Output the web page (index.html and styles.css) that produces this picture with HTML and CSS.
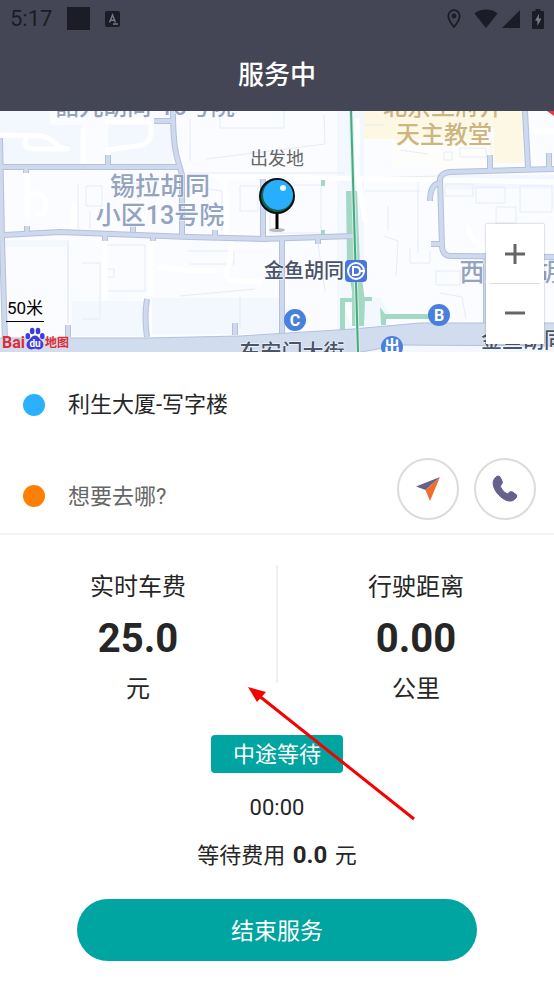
FILE: index.html
```html
<!DOCTYPE html>
<html lang="zh-CN">
<head>
    <meta charset="UTF-8">
    <meta name="viewport" content="width=device-width, initial-scale=1.0">
    <title>服务中</title>
    <link rel="stylesheet" href="styles.css">
</head>
<body>
    <header>
        <div class="status-bar">
            <span class="clock">5:17</span>
            <span class="square"></span>
            <svg width="15" height="16" viewBox="0 0 15 16">
                <rect width="15" height="16" rx="2" fill="#1b1c25"/>
                <path d="M4.5 11.5 7.5 4l3 7.5M5.5 9.3h4M8 13h5" fill="none" stroke="#777986" stroke-width="1.4"/>
            </svg>
            <span class="status-right">
                <svg width="14" height="20" viewBox="0 0 14 20">
                    <path d="M7 1.2a5.7 5.7 0 0 0-5.7 5.7C1.3 11 7 18 7 18s5.7-7 5.7-11.1A5.7 5.7 0 0 0 7 1.2z" fill="none" stroke="#1b1c25" stroke-width="1.8"/>
                    <circle cx="7" cy="7" r="2.4" fill="#1b1c25"/>
                </svg>
                <svg class="wifi" width="24" height="19" viewBox="0 0 24 19">
                    <path d="M12 19 .4 4.6C3.5 2 7.5.5 12 .5S20.5 2 23.6 4.6z" fill="#1b1c25"/>
                </svg>
                <svg class="signal" width="18" height="18" viewBox="0 0 18 18">
                    <path d="M0 18 18 0v18z" fill="#1b1c25"/>
                </svg>
                <svg width="12" height="20" viewBox="0 0 12 20">
                    <path d="M3.5 0h5v2H11q1 0 1 1v16q0 1-1 1H1q-1 0-1-1V3q0-1 1-1h2.5z" fill="#1b1c25"/>
                    <path d="M7.2 4.5 3 11.7h2.4v5.3L9.4 9.5H6.8z" fill="#777986"/>
                </svg>
            </span>
        </div>
        <h1>服务中</h1>
    </header>

    <section class="map">
        <svg class="map-canvas" viewBox="0 0 554 241" preserveAspectRatio="xMidYMid slice">
            <rect width="554" height="241" fill="#fafcff"/>

            <!-- land blocks -->
            <g fill="#f2f8fe">
                <path d="M0 0H50V14H82V54H0z"/>
                <path d="M108 12H172V54H108z"/>
                <path d="M5 129H68V136H5z"/>
                <path d="M72 190H145V225H72zM152 187H280V223H152z"/>
                <path d="M337 0H364V241H337z"/>
                <path d="M364 186H380L390 205 384 215H364z"/>
                <path d="M0 232H554V241H0z"/>
                <path d="M446 64H554V78H446z"/>
            </g>
            <g fill="#fdf8e3">
                <path d="M364 0H500V18H480V56H492V28H364z"/>
                <path d="M500 0H523V52H494V18H500z"/>
            </g>
            <path d="M393 28H490V57H393z" fill="#fdfdfb"/>

            <!-- building outlines -->
            <g fill="none" stroke="#e6ecf6">
                <path d="M78 73V118M86 75H102V95H86zM90 100V118M112 72H138V90"/>
                <path d="M68 134V213M82 152H100V208H82M105 158H114V166H105M105 134H145V180H108"/>
                <path d="M190 8V50M220 0V17H284V0M206 48 325 33 324 4"/>
                <path d="M240 75H258V100H240zM270 74H321V122H270zM186 75 222 80V120"/>
                <path d="M188 140H234V153H190M180 185 255 178M240 186V218M325 180 318 133"/>
                <path d="M388 95V120M418 70V142M365 80H420M410 137V152H430V140"/>
                <path d="M445 73H473V85H445zM476 76H505V92H476zM520 75H552V101H520zM496 96H516V112H496z"/>
                <path d="M436 160H460V174H436zM440 182 462 186 466 208M384 125 398 130 396 165"/>
                <path d="M444 41H452V49H444zM460 37H486V46H460zM400 39 428 43M365 14H384"/>
                <path d="M188 62H345M365 67 440 65M105 132V187M68 129V212"/>
            </g>

            <!-- small lanes -->
            <g fill="none" stroke="#fff" stroke-width="5" stroke-linecap="round">
                <path d="M0 24 42 25Q54 28 58 36L68 38M26 27Q22 38 34 38H66M83 19V58"/>
                <path d="M108 11H149Q152 12 151 22T142 34L108 39V50"/>
                <path d="M27 63V105M29 83H40Q47 86 46 95T38 103M74 94V120M105 132V187M151 132V184"/>
                <path d="M188 65 554 71M222 68Q228 80 226 122M231 130Q231 150 227 160T240 170H260"/>
                <path d="M160 156 190 160H215M345 190 354 214M468 117Q473 135 489 137"/>
                <path d="M357 10V60L365 110M530 20H554"/>
            </g>

            <!-- green belts -->
            <g fill="#a5d8c3">
                <path d="M346 80H357L360 154 365 190 364 215H352V180L347 154z"/>
                <path d="M340 187H354V191H345V221H340zM321 69H325V75H321zM321 119H325V125H321z"/>
                <path d="M364 186H372V190H364zM380 196 385 203H430V208H386V214H381z"/>
            </g>

            <!-- roads, edge then surface -->
            <defs>
                <g id="roads" fill="none" stroke-linejoin="round">
                    <path d="M0 27 2 127 5 230M0 56H178M173 0Q173 35 178 50L182 64V124"/>
                    <path d="M4 124 60 121 190 126 263 128 353 125M108 44V56M154 10H173"/>
                    <path d="M263 68V128M282 128V225M147 226Q144 205 147 188M68 226V214"/>
                    <path d="M525 0 528 57M554 58 450 61Q441 62 440 68L442 136Q443 145 451 145L554 146M486 146V227"/>
                    <path d="M490 44V58M549 42V57M440 72Q430 73 430 90M431 133H441"/>
                    <path d="M26 56V62M27 115V121M105 123V130M133 115V121M153 124V130M235 212V224M215 119V126M318 127V133"/>
                </g>
            </defs>
            <use href="#roads" stroke="#b3c1dc" stroke-width="6"/>
            <use href="#roads" stroke="#ced9ed" stroke-width="4"/>
            <path d="M-2 227H147L240 225 353 218 420 212H556V235L400 234 350 243H-2z" fill="#d1dcef" stroke="#b3c1dc"/>

            <!-- metro line -->
            <path d="M351 0 358 241" stroke="#d5efe4" stroke-width="4"/>
            <path d="M351 0 358 241" stroke="#46a983" stroke-width="2"/>
            <path d="M547 0H554V5z" fill="#e23a3f"/>

            <g class="map-label area">
                <text x="145" y="4" font-size="24">韶九胡同-16号院</text>
                <text x="160" y="84" font-size="25">锡拉胡同</text>
                <text x="160" y="113" font-size="25">小区13号院</text>
                <text x="522" y="170" font-size="25">西堂子胡同</text>
            </g>
            <g class="map-label sight" font-size="24">
                <text x="443" y="4">北京王府井</text>
                <text x="444" y="32">天主教堂</text>
            </g>
            <g class="map-label road">
                <text x="292" y="248" font-size="21">东安门大街</text>
                <text x="304" y="167" font-size="20">金鱼胡同</text>
                <text x="523" y="236" font-size="21">金鱼胡同</text>
            </g>

            <!-- station -->
            <rect x="345" y="149" width="22" height="22" rx="4" fill="#4a75dc"/>
            <circle cx="356" cy="160" r="8" fill="none" stroke="#fff" stroke-width="2"/>
            <path d="M353 156H356Q360 156 360 160T356 164H353zM360 160H365" fill="none" stroke="#fff" stroke-width="2"/>

            <g fill="#4a80dd">
                <circle cx="295" cy="209" r="11"/>
                <circle cx="439" cy="204" r="11"/>
                <circle cx="392" cy="236" r="11"/>
            </g>
            <g class="exit">
                <text x="295" y="215">C</text>
                <text x="439" y="210">B</text>
                <text x="392" y="241">出</text>
            </g>

            <!-- start pin -->
            <text class="start" x="277" y="54">出发地</text>
            <ellipse cx="277" cy="119" rx="8" ry="2" fill="#b9bcc2"/>
            <path d="M277 100V118" stroke="#000" stroke-width="3"/>
            <circle cx="277" cy="85" r="17" fill="#17604f"/>
            <circle cx="277" cy="85" r="17" fill="none" stroke="#0a0f12" stroke-width="2"/>
            <circle cx="278" cy="84" r="15" fill="#28aefc"/>
            <circle cx="283" cy="77" r="3" fill="#e8f7ff"/>
        </svg>

        <div class="scale">50米</div>
        <div class="brand">
            <span>Bai</span>
            <svg width="20" height="23" viewBox="0 0 20 23">
                <g fill="#3d3be0">
                    <ellipse cx="2.8" cy="9" rx="2.3" ry="3.1"/>
                    <ellipse cx="7.2" cy="4" rx="2.3" ry="3.3"/>
                    <ellipse cx="13" cy="4" rx="2.3" ry="3.3"/>
                    <ellipse cx="17.3" cy="9" rx="2.3" ry="3.1"/>
                    <path d="M10 8.500c3 0 4 3 6.500 5 2.500 2.200 2.700 7-.8 8.500-2.500 1-4-.2-5.700-.2s-3.200 1.200-5.700.2C.8 20.500 1 15.700 3.500 13.500 6 11.500 7 8.500 10 8.500z"/>
                </g>
                <text x="10" y="20">du</text>
            </svg>
            <span class="brand-map">地图</span>
        </div>

        <div class="zoom">
            <button type="button" aria-label="放大">
                <svg width="22" height="22" viewBox="0 0 22 22"><path d="M11 1V21M1 11H21" stroke="#666" stroke-width="3"/></svg>
            </button>
            <button type="button" aria-label="缩小">
                <svg width="22" height="22" viewBox="0 0 22 22"><path d="M1 11H21" stroke="#666" stroke-width="3"/></svg>
            </button>
        </div>
    </section>

    <main>
        <section class="trip">
            <div class="place">
                <span class="dot dot-start"></span>
                <span>利生大厦-写字楼</span>
            </div>
            <div class="place">
                <label class="dot dot-end" for="destination" aria-label="目的地"></label>
                <input type="text" id="destination" placeholder="想要去哪?">
            </div>
            <div class="actions">
                <button type="button" aria-label="导航">
                    <svg width="26" height="26" viewBox="0 0 26 26">
                        <path d="M25 1 1 10.5 10.5 14z" fill="#65618a"/>
                        <path d="M25 1 10.5 14 15 25z" fill="#ee6f2d"/>
                    </svg>
                </button>
                <button type="button" aria-label="电话">
                    <svg width="26" height="28" viewBox="0 0 26 28">
                        <path d="M3.500 2.500C5 .8 7 .5 8 2l2 4c.8 1.500.2 2.500-.8 3.800-.8 1-.8 1.800-.2 2.900 1.300 2.400 3 4.200 5.200 5.600 1 .6 1.800.4 2.600-.4 1.200-1.300 2.400-1.700 3.800-.8l3 2c1.500 1 1.300 2.700.1 4.200-2.800 3.500-7 3.500-11.200 1.200C7.500 21.800 3 16.500 1.500 11 .6 7.500 1.300 4.800 3.500 2.500z" fill="#65618a" stroke="#65618a"/>
                    </svg>
                </button>
            </div>
        </section>

        <section class="stats">
            <div class="stat">
                <span>实时车费</span>
                <strong>25.0</strong>
                <span>元</span>
            </div>
            <div class="stat">
                <span>行驶距离</span>
                <strong>0.00</strong>
                <span>公里</span>
            </div>
        </section>

        <section class="waiting">
            <button type="button" class="wait-button">中途等待</button>
            <time>00:00</time>
            <p>等待费用 <strong>0.0</strong> 元</p>
            <svg class="arrow" width="170" height="136" viewBox="0 0 170 136">
                <path d="M12 10 168 134" stroke="#f60000" stroke-width="3"/>
                <path d="M2 2 20 7 11 17z" fill="#f60000"/>
            </svg>
        </section>

        <button type="button" class="finish-button">结束服务</button>
    </main>
</body>
</html>
```

FILE: styles.css
```css
* {
    box-sizing: border-box;
}

body {
    font-family: Roboto, "Noto Sans CJK SC", sans-serif;
    margin: 0;
    background-color: white;
    color: #262626;
}

button, input {
    font-family: inherit;
    padding: 0;
    border: none;
    background: none;
}

button {
    cursor: pointer;
}

svg {
    display: block;
}

header {
    height: 111px;
    background-color: #444656;
}

.status-bar {
    display: flex;
    align-items: center;
    height: 37px;
    padding: 0 10px;
    color: #1b1c25;
}

.clock {
    font-size: 22px;
}

.square {
    width: 23px;
    height: 23px;
    margin: 0 15px;
    background-color: #1b1c25;
}

.status-right {
    display: flex;
    align-items: center;
    margin-left: auto;
}

.wifi {
    margin-left: 13px;
}

.signal {
    margin: 0 12px 0 4px;
}

h1 {
    margin: 0;
    color: white;
    font-size: 26px;
    font-weight: 500;
    line-height: 76px;
    text-align: center;
}

/* Map */
.map {
    position: relative;
    height: 241px;
    overflow: hidden;
}

.map-canvas {
    width: 100%;
    height: 100%;
}

.map-label {
    text-anchor: middle;
    font-weight: 500;
    paint-order: stroke;
    stroke: #fafcff;
    stroke-width: 1px;
}

.area {
    fill: #94a3be;
}

.sight {
    fill: #cfb57a;
}

.road {
    fill: #4a5368;
}

.exit {
    fill: white;
    font-size: 16px;
    font-weight: bold;
    text-anchor: middle;
}

.start {
    fill: #666;
    font-size: 18px;
    text-anchor: middle;
}

.scale {
    position: absolute;
    left: 6px;
    bottom: 30px;
    width: 38px;
    border-bottom: 1px solid black;
    color: black;
    font-size: 17px;
    line-height: 26px;
    text-align: center;
    white-space: nowrap;
}

.brand {
    position: absolute;
    left: 2px;
    bottom: 2px;
    display: flex;
    align-items: flex-end;
    color: #e02b34;
    font-size: 16px;
    font-weight: bold;
    line-height: 14px;
}

.brand text {
    fill: white;
    font-size: 10px;
    text-anchor: middle;
}

.brand-map {
    font-size: 12px;
}

.zoom {
    position: absolute;
    right: 10px;
    bottom: 8px;
    display: flex;
    flex-direction: column;
    width: 58px;
    padding: 0 4px 2px;
    background-color: white;
    box-shadow: 0 0 2px rgba(0, 0, 0, 0.3);
}

.zoom button {
    display: flex;
    align-items: center;
    justify-content: center;
    height: 59px;
}

.zoom button + button {
    border-top: 1px solid #ddd;
}

/* Start and destination */
.trip {
    position: relative;
    padding: 30px 18px 14px 23px;
    border-bottom: 2px solid #f3f3f3;
    font-size: 22px;
    line-height: 42px;
}

.place {
    display: flex;
    align-items: center;
    gap: 23px;
    height: 46px;
}

.place + .place {
    margin-top: 45px;
}

.place input {
    flex: 1;
    min-width: 0;
    margin-right: 140px;
    font-size: 22px;
    color: #262626;
}

.place input::placeholder {
    color: #666;
    opacity: 1;
}

.dot {
    width: 22px;
    height: 22px;
    border-radius: 50%;
}

.dot-start {
    background-color: #2bb0fd;
}

.dot-end {
    background-color: #ff8000;
}

.actions {
    position: absolute;
    right: 18px;
    bottom: 13px;
    display: flex;
    gap: 15px;
}

.actions button {
    display: flex;
    align-items: center;
    justify-content: center;
    width: 62px;
    height: 62px;
    border: 2px solid #dcdcdc;
    border-radius: 50%;
    background-color: white;
}

/* Fare and distance */
.stats {
    display: flex;
    padding-top: 30px;
}

.stat {
    flex: 1;
    display: flex;
    flex-direction: column;
    align-items: center;
    height: 118px;
    font-size: 24px;
    line-height: 44px;
}

.stat + .stat {
    border-left: 2px solid #f0f0f0;
}

.stat strong {
    margin: 4px 0 2px;
    font-size: 40px;
    line-height: 52px;
}

/* Waiting */
.waiting {
    position: relative;
    display: flex;
    flex-direction: column;
    align-items: center;
    padding-top: 52px;
    font-size: 22px;
}

.wait-button {
    width: 132px;
    height: 38px;
    padding-top: 2px;
    border-radius: 4px;
    background-color: #00a4a0;
    color: white;
    font-size: 22px;
    line-height: 36px;
}

.waiting time {
    margin-top: 19px;
    line-height: 32px;
}

.waiting p {
    margin: 15px 0 0;
    line-height: 32px;
}

.waiting p strong {
    margin: 0 2px;
    font-size: 24px;
}

.arrow {
    position: absolute;
    top: 2px;
    left: 50%;
    margin-left: -31px;
}

.finish-button {
    display: block;
    width: calc(100% - 154px);
    height: 62px;
    margin: 27px auto 23px;
    padding-bottom: 2px;
    border-radius: 31px;
    background-color: #00a4a0;
    color: white;
    font-size: 23px;
}
```
